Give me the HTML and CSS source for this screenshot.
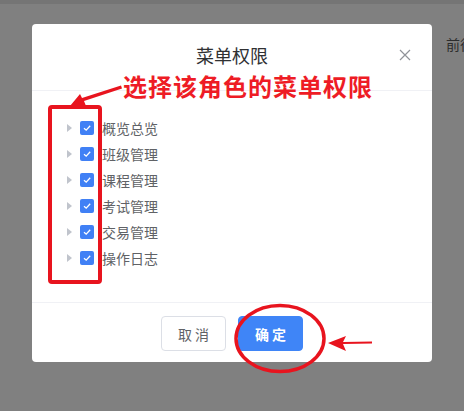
FILE: index.html
```html
<!DOCTYPE html>
<html>
<head>
<meta charset="utf-8">
<link rel="stylesheet" href="styles.css">
</head>
<body>
<div class="topstrip"></div>
<div class="bgtext">前往</div>
<div class="modal">
  <div class="modal-header">
    <span class="modal-title">菜单权限</span>
    <span class="close">
      <svg width="12" height="12" viewBox="0 0 12 12"><path d="M1 1L11 11M11 1L1 11" stroke="#909399" stroke-width="1.2" fill="none"/></svg>
    </span>
  </div>
  <div class="modal-body">
    <ul class="tree">
      <li class="node"><span class="caret"></span><span class="cb"><svg width="14" height="14" viewBox="0 0 14 14"><path d="M4 7.2L6.2 9.2L10.2 4.8" stroke="#fff" stroke-width="1.3" fill="none"/></svg></span><span class="label">概览总览</span></li>
      <li class="node"><span class="caret"></span><span class="cb"><svg width="14" height="14" viewBox="0 0 14 14"><path d="M4 7.2L6.2 9.2L10.2 4.8" stroke="#fff" stroke-width="1.3" fill="none"/></svg></span><span class="label">班级管理</span></li>
      <li class="node"><span class="caret"></span><span class="cb"><svg width="14" height="14" viewBox="0 0 14 14"><path d="M4 7.2L6.2 9.2L10.2 4.8" stroke="#fff" stroke-width="1.3" fill="none"/></svg></span><span class="label">课程管理</span></li>
      <li class="node"><span class="caret"></span><span class="cb"><svg width="14" height="14" viewBox="0 0 14 14"><path d="M4 7.2L6.2 9.2L10.2 4.8" stroke="#fff" stroke-width="1.3" fill="none"/></svg></span><span class="label">考试管理</span></li>
      <li class="node"><span class="caret"></span><span class="cb"><svg width="14" height="14" viewBox="0 0 14 14"><path d="M4 7.2L6.2 9.2L10.2 4.8" stroke="#fff" stroke-width="1.3" fill="none"/></svg></span><span class="label">交易管理</span></li>
      <li class="node"><span class="caret"></span><span class="cb"><svg width="14" height="14" viewBox="0 0 14 14"><path d="M4 7.2L6.2 9.2L10.2 4.8" stroke="#fff" stroke-width="1.3" fill="none"/></svg></span><span class="label">操作日志</span></li>
    </ul>
  </div>
  <div class="modal-footer">
    <button class="btn btn-default">取 消</button>
    <button class="btn btn-primary">确 定</button>
  </div>
</div>
<div class="note">选择该角色的菜单权限</div>
<svg class="marks" width="464" height="411" viewBox="0 0 464 411">
  <path d="M121 85.5L122 88.5L84 101L86 106L70 106L80 94L82 98Z" fill="#e8141e"/>
  <rect x="50" y="107" width="50" height="175" rx="2" fill="none" stroke="#e8141e" stroke-width="4"/>
  <ellipse cx="280" cy="338.5" rx="44" ry="33" fill="none" stroke="#e8141e" stroke-width="3.5"/>
  <path d="M372 341.5L372 343.5L343 344L346 351L328 343L346 336L343 342Z" fill="#e8141e"/>
</svg>
</body>
</html>
```
FILE: styles.css
```css
* { box-sizing: border-box; }
html, body { margin: 0; padding: 0; }
body {
  width: 464px;
  height: 411px;
  background: #808080;
  font-family: "Noto Sans CJK SC", "Noto Sans", sans-serif;
  overflow: hidden;
  position: relative;
}
.topstrip {
  height: 4px;
  background: #757575;
}
.bgtext {
  position: absolute;
  left: 446px;
  top: 34px;
  font-size: 14px;
  color: #2d2d2d;
  line-height: 20px;
  white-space: nowrap;
}
.modal {
  margin: 20px 0 0 32px;
  width: 400px;
  height: 338px;
  background: #fff;
  border-radius: 4px;
  display: flex;
  flex-direction: column;
}
.modal-header {
  height: 67px;
  border-bottom: 1px solid #f0f1f5;
  display: flex;
  align-items: center;
  justify-content: center;
  position: relative;
  padding-bottom: 4px;
}
.modal-title {
  font-size: 18px;
  color: #303133;
  line-height: 24px;
}
.close {
  position: absolute;
  right: 21px;
  top: 25px;
  width: 12px;
  height: 12px;
  display: flex;
}
.modal-body {
  flex: 1;
  padding: 24px 0 0 33px;
}
.tree {
  list-style: none;
  margin: 0;
  padding: 0;
}
.node {
  height: 26px;
  display: flex;
  align-items: center;
}
.caret {
  width: 0;
  height: 0;
  border-left: 5px solid #c0c4cc;
  border-top: 4px solid transparent;
  border-bottom: 4px solid transparent;
  margin-left: 2px;
  margin-right: 8px;
}
.cb {
  width: 14px;
  height: 14px;
  border-radius: 2px;
  background: #4080f5;
  display: flex;
  margin-right: 8px;
}
.label {
  font-size: 14px;
  color: #606266;
  line-height: 20px;
}
.modal-footer {
  height: 60px;
  border-top: 1px solid #f0f1f5;
  display: flex;
  justify-content: center;
  align-items: flex-start;
  padding-top: 13px;
  gap: 12px;
}
.btn {
  width: 65px;
  height: 35px;
  border-radius: 4px;
  font-family: "Noto Sans CJK SC", sans-serif;
  font-size: 14px;
  padding: 0;
  cursor: pointer;
}
.btn-default {
  background: #fff;
  border: 1px solid #dcdfe6;
  color: #606266;
}
.btn-primary {
  background: #3f85f7;
  border: 1px solid #3f85f7;
  color: #fff;
  font-weight: bold;
}
.note {
  position: absolute;
  left: 123px;
  top: 70px;
  font-size: 24px;
  line-height: 32px;
  font-weight: bold;
  color: #ee1c25;
  letter-spacing: 1px;
}
.marks {
  position: absolute;
  left: 0;
  top: 0;
}
```
